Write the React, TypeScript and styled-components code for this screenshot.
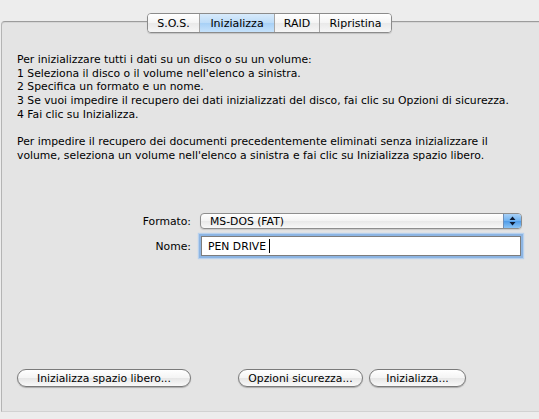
import { FC } from "react";
import styled, { createGlobalStyle } from "styled-components";

const GlobalStyle = createGlobalStyle`
  html, body {
    margin: 0;
    padding: 0;
    background: #ececec;
  }
  body {
    font-family: "DejaVu Sans", "Lucida Grande", sans-serif;
    font-size: 11px;
    color: #000;
  }
`;

const Window = styled.div`
  width: 539px;
  height: 419px;
  padding-top: 21px;
  box-sizing: border-box;
  background: #ededed;
  overflow: hidden;
`;

const Panel = styled.div`
  margin-left: 1px;
  height: 391px;
  box-sizing: border-box;
  display: flex;
  flex-direction: column;
  background: #e4e4e4;
  border-top: 1px solid #9c9c9c;
  border-left: 1px solid #b4b4b4;
  border-bottom: 1px solid #d2d2d2;
  border-top-left-radius: 4px;
  box-shadow: inset 0 1px 0 #d6d6d6;
`;

const TabBar = styled.div`
  display: flex;
  justify-content: center;
  margin-top: -9px;
  margin-left: -2px;
`;

const Segments = styled.div`
  display: flex;
  height: 18px;
  border: 1px solid #8b8b8b;
  border-radius: 4px;
  overflow: hidden;
  box-shadow: 0 1px 1px rgba(0, 0, 0, 0.15);
`;

const Tab = styled.div<{ $active?: boolean; $w: number }>`
  width: ${(p) => p.$w}px;
  display: flex;
  align-items: center;
  justify-content: center;
  font-size: 11px;
  box-sizing: border-box;
  background: ${(p) =>
    p.$active
      ? "linear-gradient(#d8eafb, #bcdcf8 50%, #a7d0f6 51%, #c6e2fb)"
      : "linear-gradient(#ffffff, #f4f4f4 50%, #e9e9e9 51%, #f6f6f6)"};
  & + & {
    border-left: 1px solid #a6a6a6;
  }
`;

const Instructions = styled.div`
  margin: 20px 0 0 15px;
  line-height: 13.7px;
  font-size: 10.8px;
`;

const Para = styled.p`
  margin: 0 0 13.7px;
`;

const Form = styled.div`
  display: grid;
  grid-template-columns: 189px 322px;
  column-gap: 9px;
  row-gap: 7px;
  align-items: center;
  margin-top: 37px;
`;

const Label = styled.label`
  text-align: right;
  font-size: 10.8px;
`;

const PopUp = styled.div`
  position: relative;
  height: 16px;
  box-sizing: border-box;
  border: 1px solid #8e8e8e;
  border-radius: 4px;
  background: linear-gradient(#ffffff, #f3f3f3 50%, #e8e8e8 51%, #f8f8f8);
  display: flex;
  align-items: center;
  padding-left: 9px;
  font-size: 10.8px;
  box-shadow: 0 1px 1px rgba(0, 0, 0, 0.12);
  overflow: hidden;
`;

const PopUpCap = styled.span`
  position: absolute;
  right: 0;
  top: 0;
  bottom: 0;
  width: 17px;
  border-left: 1px solid #6f8fb8;
  background: linear-gradient(#a9d1f7, #6eb1f0 50%, #4f9be8 51%, #8ac4f6);
  display: flex;
  align-items: center;
  justify-content: center;
`;

const TextField = styled.div`
  height: 20px;
  box-sizing: border-box;
  margin: 0 1px;
  border: 1px solid #7d7d7d;
  background: #fff;
  display: flex;
  align-items: center;
  padding-left: 6px;
  font-size: 10.8px;
  box-shadow: 0 0 0 2px #8db5e3, 0 0 1px 3px #b7d1ee;
`;

const Caret = styled.span`
  display: inline-block;
  width: 1px;
  height: 14px;
  margin-left: 3px;
  background: #000;
`;

const Spacer = styled.div`
  flex: 1;
`;

const ButtonRow = styled.div`
  display: flex;
  padding: 0 0 24px 15px;
`;

const PushButton = styled.button<{ $w: number; $gap?: number }>`
  width: ${(p) => p.$w}px;
  margin-left: ${(p) => p.$gap ?? 0}px;
  height: 18px;
  padding: 0;
  font-family: inherit;
  font-size: 10.8px;
  color: #000;
  border: 1px solid #7a7a7a;
  border-radius: 9px;
  background: linear-gradient(#ffffff, #f4f4f4 50%, #e6e6e6 51%, #f9f9f9);
  box-shadow: 0 1px 1px rgba(0, 0, 0, 0.25);
`;

const App: FC = () => {
  return (
    <>
      <GlobalStyle />
      <Window>
        <Panel>
          <TabBar>
            <Segments>
              <Tab $w={51}>S.O.S.</Tab>
              <Tab $w={75} $active>
                Inizializza
              </Tab>
              <Tab $w={45}>RAID</Tab>
              <Tab $w={72}>Ripristina</Tab>
            </Segments>
          </TabBar>

          <Instructions>
            <Para>
              Per inizializzare tutti i dati su un disco o su un volume:
              <br />1 Seleziona il disco o il volume nell'elenco a sinistra.
              <br />2 Specifica un formato e un nome.
              <br />3 Se vuoi impedire il recupero dei dati inizializzati del disco, fai clic su Opzioni di sicurezza.
              <br />4 Fai clic su Inizializza.
            </Para>
            <Para>
              Per impedire il recupero dei documenti precedentemente eliminati senza inizializzare il
              <br />
              volume, seleziona un volume nell'elenco a sinistra e fai clic su Inizializza spazio libero.
            </Para>
          </Instructions>

          <Form>
            <Label>Formato:</Label>
            <PopUp>
              MS-DOS (FAT)
              <PopUpCap>
                <svg width="7" height="10" viewBox="0 0 7 10">
                  <path d="M3.5 0.5 L6.5 4 H0.5 Z M3.5 9.5 L6.5 6 H0.5 Z" fill="#0c1a33" />
                </svg>
              </PopUpCap>
            </PopUp>
            <Label>Nome:</Label>
            <TextField>
              PEN DRIVE
              <Caret />
            </TextField>
          </Form>

          <Spacer />

          <ButtonRow>
            <PushButton $w={174}>Inizializza spazio libero...</PushButton>
            <PushButton $w={125} $gap={47}>
              Opzioni sicurezza...
            </PushButton>
            <PushButton $w={97} $gap={6}>
              Inizializza...
            </PushButton>
          </ButtonRow>
        </Panel>
      </Window>
    </>
  );
};

export default App;
